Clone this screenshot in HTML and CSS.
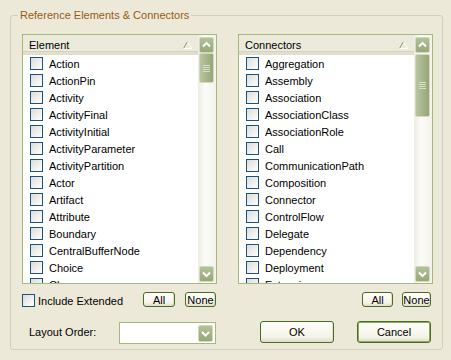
FILE: index.html
```html
<!DOCTYPE html>
<html lang="en">
<head>
<meta charset="UTF-8">
<meta name="viewport" content="width=device-width, initial-scale=1.0">
<title>Reference Elements &amp; Connectors</title>
<link rel="stylesheet" href="styles.css">
</head>
<body>
<div class="dialog">
    <fieldset class="group">
        <legend>Reference Elements &amp; Connectors</legend>
        <div class="lists">
            <div class="list">
                <div class="list-main">
                    <div class="list-head">
                        <span>Element</span>
                        <svg class="sort" width="9" height="8" viewBox="0 0 9 8"><path d="M0.5 7.5 L4.5 0.5" stroke="#8f9a62" fill="none"/><path d="M4.5 0.5 L8.5 7.5 L0.5 7.5" stroke="#fff" fill="none"/></svg>
                    </div>
                    <ul class="items">
                        <li><span class="check"></span><span class="name">Action</span></li>
                        <li><span class="check"></span><span class="name">ActionPin</span></li>
                        <li><span class="check"></span><span class="name">Activity</span></li>
                        <li><span class="check"></span><span class="name">ActivityFinal</span></li>
                        <li><span class="check"></span><span class="name">ActivityInitial</span></li>
                        <li><span class="check"></span><span class="name">ActivityParameter</span></li>
                        <li><span class="check"></span><span class="name">ActivityPartition</span></li>
                        <li><span class="check"></span><span class="name">Actor</span></li>
                        <li><span class="check"></span><span class="name">Artifact</span></li>
                        <li><span class="check"></span><span class="name">Attribute</span></li>
                        <li><span class="check"></span><span class="name">Boundary</span></li>
                        <li><span class="check"></span><span class="name">CentralBufferNode</span></li>
                        <li><span class="check"></span><span class="name">Choice</span></li>
                        <li><span class="check"></span><span class="name">Class</span></li>
                    </ul>
                </div>
                <div class="scrollbar">
                    <div class="sb-btn"><svg width="15" height="16" viewBox="0 0 15 16"><polyline points="4,9.5 7.5,6 11,9.5" stroke="#fff" stroke-width="2" fill="none"/></svg></div>
                    <div class="sb-track"><div class="sb-thumb short"><span class="grip"></span></div></div>
                    <div class="sb-btn"><svg width="15" height="16" viewBox="0 0 15 16"><polyline points="4,6.5 7.5,10 11,6.5" stroke="#fff" stroke-width="2" fill="none"/></svg></div>
                </div>
            </div>
            <div class="list">
                <div class="list-main">
                    <div class="list-head">
                        <span>Connectors</span>
                        <svg class="sort" width="9" height="8" viewBox="0 0 9 8"><path d="M0.5 7.5 L4.5 0.5" stroke="#8f9a62" fill="none"/><path d="M4.5 0.5 L8.5 7.5 L0.5 7.5" stroke="#fff" fill="none"/></svg>
                    </div>
                    <ul class="items">
                        <li><span class="check"></span><span class="name">Aggregation</span></li>
                        <li><span class="check"></span><span class="name">Assembly</span></li>
                        <li><span class="check"></span><span class="name">Association</span></li>
                        <li><span class="check"></span><span class="name">AssociationClass</span></li>
                        <li><span class="check"></span><span class="name">AssociationRole</span></li>
                        <li><span class="check"></span><span class="name">Call</span></li>
                        <li><span class="check"></span><span class="name">CommunicationPath</span></li>
                        <li><span class="check"></span><span class="name">Composition</span></li>
                        <li><span class="check"></span><span class="name">Connector</span></li>
                        <li><span class="check"></span><span class="name">ControlFlow</span></li>
                        <li><span class="check"></span><span class="name">Delegate</span></li>
                        <li><span class="check"></span><span class="name">Dependency</span></li>
                        <li><span class="check"></span><span class="name">Deployment</span></li>
                        <li><span class="check"></span><span class="name">Extension</span></li>
                    </ul>
                </div>
                <div class="scrollbar">
                    <div class="sb-btn"><svg width="15" height="16" viewBox="0 0 15 16"><polyline points="4,9.5 7.5,6 11,9.5" stroke="#fff" stroke-width="2" fill="none"/></svg></div>
                    <div class="sb-track"><div class="sb-thumb tall"><span class="grip"></span></div></div>
                    <div class="sb-btn"><svg width="15" height="16" viewBox="0 0 15 16"><polyline points="4,6.5 7.5,10 11,6.5" stroke="#fff" stroke-width="2" fill="none"/></svg></div>
                </div>
            </div>
        </div>

        <div class="row actions">
            <div class="half">
                <label class="option"><span class="check"></span>Include Extended</label>
                <button class="btn small left-all">All</button>
                <button class="btn small left-none">None</button>
            </div>
            <div class="half">
                <button class="btn small right-all">All</button>
                <button class="btn small right-none">None</button>
            </div>
        </div>

        <div class="row footer">
            <div class="half">
                <span class="label">Layout Order:</span>
                <div class="combo">
                    <div class="combo-btn"><svg width="15" height="17" viewBox="0 0 15 17"><polyline points="4,7 7.5,10.5 11,7" stroke="#fff" stroke-width="2" fill="none"/></svg></div>
                </div>
            </div>
            <div class="half">
                <button class="btn big ok">OK</button>
                <button class="btn big cancel">Cancel</button>
            </div>
        </div>
    </fieldset>
</div>
</body>
</html>
```

FILE: styles.css
```css
html, body {
    margin: 0;
    padding: 0;
}
body {
    width: 451px;
    height: 360px;
    background-color: #ece9d8;
    font-family: "Liberation Sans", Arial, sans-serif;
    font-size: 11px;
    color: #000;
    overflow: hidden;
}
.dialog {
    padding-top: 9px;
}
.group {
    width: 411px;
    margin: 0 0 0 10px;
    padding: 12px 9px 5px 11px;
    border: 1px solid #d0d0bf;
    border-radius: 3px;
}
.group legend {
    padding: 0 2px;
    margin-left: -4px;
    line-height: 13px;
    color: #9b5a12;
}
.lists {
    display: flex;
    gap: 21px;
}
.list {
    display: flex;
    width: 193px;
    height: 248px;
    border: 1px solid #a5b97f;
    background-color: #fff;
}
.list-main {
    width: 175px;
    display: flex;
    flex-direction: column;
}
.list-head {
    height: 15px;
    padding: 2px 6px 0 6px;
    display: flex;
    align-items: center;
    justify-content: space-between;
    background-color: #ebeadb;
    border-bottom: 3px solid #e2decd;
    box-shadow: inset 0 -1px 0 #d6d2c2;
}
.items {
    list-style: none;
    margin: 0;
    padding: 0;
    overflow: hidden;
    flex: 1;
}
.items li {
    height: 17px;
    display: flex;
    align-items: flex-start;
    padding-left: 7px;
    white-space: nowrap;
}
.items .check {
    margin-top: 2px;
}
.name {
    line-height: 19px;
}
.check {
    display: inline-block;
    width: 11px;
    height: 11px;
    border: 1px solid #1c5180;
    background: linear-gradient(135deg, #dcdcd7, #fff);
    margin-right: 6px;
    flex-shrink: 0;
}
.scrollbar {
    width: 15px;
    padding: 2px 2px 1px 1px;
    display: flex;
    flex-direction: column;
    background: linear-gradient(to right, #eeede5, #fbfbf8 40%, #f3f2ea);
}
.sb-btn, .combo-btn {
    box-sizing: border-box;
    width: 15px;
    height: 16px;
    border: 1px solid #d2d9c0;
    border-radius: 2px;
    background: linear-gradient(to bottom, #b3c197, #98a87a);
    display: flex;
}
.sb-btn svg, .combo-btn svg {
    margin: -1px;
}
.sb-track {
    flex: 1;
}
.sb-thumb {
    box-sizing: border-box;
    border: 1px solid #d2d9c0;
    border-radius: 2px;
    background: linear-gradient(to right, #b9c5a1, #a7b58b 50%, #96a577);
    display: flex;
    align-items: center;
    justify-content: center;
}
.sb-thumb.short {
    height: 30px;
}
.sb-thumb.tall {
    height: 63px;
    margin-top: 1px;
}
.grip {
    width: 7px;
    height: 7px;
    background: repeating-linear-gradient(to bottom, #d8dfc8 0 1px, transparent 1px 2px);
}
.row {
    display: flex;
    gap: 21px;
}
.half {
    width: 195px;
    display: flex;
    align-items: center;
}
.actions {
    margin-top: 8px;
    height: 15px;
}
.option {
    display: flex;
    align-items: center;
    margin-top: 2px;
}
.option .check {
    margin-right: 3px;
}
.btn {
    box-sizing: border-box;
    font-family: "Liberation Sans", Arial, sans-serif;
    font-size: 11px;
    color: #000;
    padding: 0;
    border: 1px solid #4a6b23;
    border-radius: 3px;
    background: linear-gradient(to bottom, #fffffa, #f4f3e8 75%, #dedbca);
    box-shadow: inset -1px -1px 0 #e2dfcf;
}
.btn.small {
    height: 15px;
    line-height: 12px;
}
.left-all {
    width: 32px;
    margin-left: auto;
}
.left-none {
    width: 31px;
    margin-left: 10px;
    margin-right: 1px;
}
.right-all {
    width: 31px;
    margin-left: auto;
}
.right-none {
    width: 29px;
    margin-left: 9px;
    margin-right: 2px;
}
.footer {
    margin-top: 14px;
    height: 23px;
}
.footer .half {
    align-items: flex-start;
}
.label {
    padding-left: 7px;
    line-height: 23px;
}
.combo {
    box-sizing: border-box;
    width: 97px;
    height: 22px;
    margin: 1px 1px 0 auto;
    border: 1px solid #a5b97f;
    background-color: #fff;
    display: flex;
    justify-content: flex-end;
    padding: 2px 2px 0 0;
}
.combo-btn {
    height: 17px;
}
.btn.big {
    width: 74px;
    height: 22px;
}
.ok {
    margin-left: 22px;
}
.cancel {
    margin-left: 23px;
    box-shadow: inset 0 0 0 1px #92ac66;
}
```
